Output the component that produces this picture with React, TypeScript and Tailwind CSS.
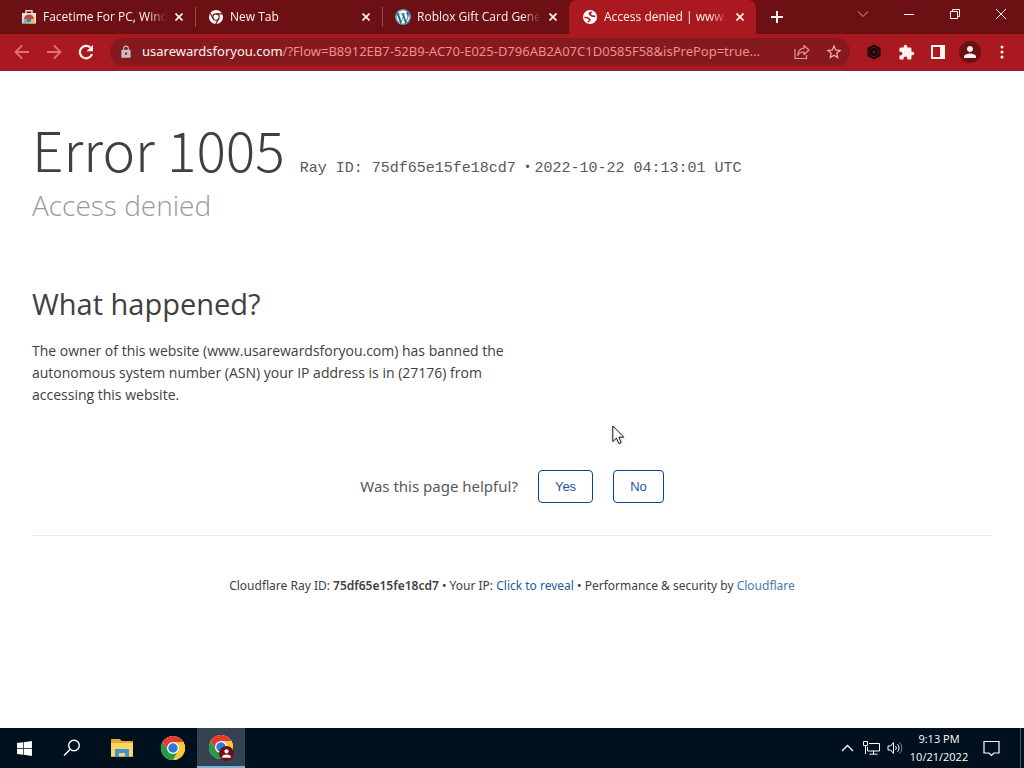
import type { ReactNode } from "react";
import { MdExtension, MdPerson, MdStarBorder, MdLock } from "react-icons/md";
import { FaWordpress, FaWindows } from "react-icons/fa";

function ChromeLogo({ size }: { size: number }) {
  return (
    <svg width={size} height={size} viewBox="0 0 48 48" aria-hidden="true">
      <circle cx="24" cy="24" r="24" fill="#fff" />
      <path d="M24 12h20.8A24 24 0 0 0 3.2 12l10.4 18z" fill="#e33b2e" />
      <path d="M34.4 30 24 48A24 24 0 0 0 44.8 12H24z" fill="#fcc934" />
      <path d="M13.6 30 3.2 12A24 24 0 0 0 24 48l10.4-18z" fill="#249a46" />
      <circle cx="24" cy="24" r="12" fill="#fff" />
      <circle cx="24" cy="24" r="9.5" fill="#2f78e0" />
    </svg>
  );
}

function StoreIcon() {
  return (
    <svg width="16" height="16" viewBox="0 0 16 16" aria-hidden="true">
      <path d="M5 4V1.800h6V4" fill="none" stroke="#e8dcd8" strokeWidth="1.400" />
      <path d="M1 4h14v10.500H1z" fill="#e4dedb" />
      <path d="M3 10a5 4.500 0 0 1 10 0z" fill="#d8402f" />
      <path d="M2.500 10H6l2 4.500H2.500z" fill="#8fb09a" />
      <path d="M13.500 10H10l-2 4.500h5.500z" fill="#f0c13b" />
      <circle cx="8" cy="11" r="2.200" fill="#3c7dd0" />
    </svg>
  );
}

function NewTabIcon() {
  return (
    <svg width="14" height="14" viewBox="0 0 48 48" aria-hidden="true">
      <circle cx="24" cy="24" r="24" fill="#fff" />
      <circle cx="24" cy="24" r="11" fill="none" stroke="#6d1014" strokeWidth="4" />
      <path d="M24 13h22M14.500 29.500 4 11M33.500 29.500 23 48" stroke="#6d1014" strokeWidth="4" />
    </svg>
  );
}

function GlobeIcon() {
  return (
    <svg width="16" height="16" viewBox="0 0 16 16" aria-hidden="true">
      <circle cx="8" cy="8" r="7" fill="#fff" />
      <path
        d="M2.300 8.600c1.600-.3 3.400-.2 4 .7.500.800 1.700.700 1.700 1.700 0 .9-1.400 1-2 2.400"
        fill="none"
        stroke="#a81a20"
        strokeWidth="1.500"
      />
      <path
        d="M9.700 2.800c-.3 1-2.300.8-2.300 2 0 1 1.500.8 2 1.700.5.800 2.200.3 3.900 1"
        fill="none"
        stroke="#a81a20"
        strokeWidth="1.800"
      />
    </svg>
  );
}

type TabProps = { icon: ReactNode; title: string; active?: boolean; divider?: boolean };

function Tab({ icon, title, active, divider }: TabProps) {
  return (
    <div
      className={`flex h-[34px] w-[187px] min-w-0 items-center pr-2 pl-[13px] ${
        active ? "rounded-t-lg bg-[#a9191f]" : ""
      }`}
    >
      <span className="flex w-4 shrink-0 justify-center">{icon}</span>
      <span className="ml-[6px] min-w-0 flex-1 overflow-hidden mask-r-from-85% text-xs whitespace-nowrap">
        {title}
      </span>
      <button aria-label={`Close ${title}`} className="ml-1 flex size-4 shrink-0 items-center justify-center">
        <svg width="8" height="8" viewBox="0 0 8 8" stroke="currentColor" strokeWidth="1.700">
          <path d="m.5.5 7 7m0-7-7 7" />
        </svg>
      </button>
      {divider && <span className="-mr-[9px] ml-2 h-5 w-px shrink-0 bg-[#a0474b]" />}
    </div>
  );
}

function WindowButton({ label, children }: { label: string; children: ReactNode }) {
  return (
    <button aria-label={label} className="flex h-7 w-[46px] items-center justify-center">
      <svg width="12" height="12" viewBox="0 0 12 12" fill="none" stroke="currentColor">
        {children}
      </svg>
    </button>
  );
}

function IconButton({ label, className = "", children }: { label: string; className?: string; children: ReactNode }) {
  return (
    <button aria-label={label} className={`flex size-8 shrink-0 items-center justify-center ${className}`}>
      {children}
    </button>
  );
}

function BrowserFrame() {
  return (
    <header className="text-[#fff4f0]">
      <div className="flex h-[34px] bg-[#6d1014]">
        <div className="flex min-w-0 pl-2">
          <Tab icon={<StoreIcon />} title="Facetime For PC, Windows" divider />
          <Tab icon={<NewTabIcon />} title="New Tab" divider />
          <Tab icon={<FaWordpress size={16} className="rounded-full bg-[#17708f]" />} title="Roblox Gift Card Generator" />
          <Tab icon={<GlobeIcon />} title="Access denied | www.usarewardsforyou.com" active />
        </div>
        <button aria-label="New tab" className="ml-[13px] flex w-4 shrink-0 items-center justify-center">
          <svg width="12" height="12" viewBox="0 0 12 12" stroke="currentColor" strokeWidth="2">
            <path d="M6 0v12M0 6h12" />
          </svg>
        </button>
        <div className="ml-auto flex shrink-0">
          <WindowButton label="Search tabs">
            <path d="m1 3.500 5 5 5-5" stroke="#e4a8a4" />
          </WindowButton>
          <WindowButton label="Minimize">
            <path d="M1 6.500h10" />
          </WindowButton>
          <WindowButton label="Restore">
            <path d="M1.500 3.500h7v7h-7zM3.500 3.500v-2h7v7h-2" />
          </WindowButton>
          <WindowButton label="Close window">
            <path d="m1 1 10 10M11 1 1 11" />
          </WindowButton>
        </div>
      </div>
      <div className="flex h-[37px] items-center border-b border-[#7d2a35] bg-[#a9191f] px-[6px]">
        <IconButton label="Back" className="text-[#dc7370]">
          <svg width="16" height="16" viewBox="0 0 16 16" fill="none" stroke="currentColor" strokeWidth="1.800">
            <path d="M15 8H2M8 1.500 1.500 8 8 14.500" />
          </svg>
        </IconButton>
        <IconButton label="Forward" className="text-[#dc7370]">
          <svg width="16" height="16" viewBox="0 0 16 16" fill="none" stroke="currentColor" strokeWidth="1.800">
            <path d="M1 8h13M8 1.500 14.500 8 8 14.500" />
          </svg>
        </IconButton>
        <IconButton label="Reload">
          <svg width="16" height="16" viewBox="0 0 16 16" aria-hidden="true">
            <path d="M14 10A6.200 6.200 0 1 1 12.300 3.500" fill="none" stroke="currentColor" strokeWidth="2.200" />
            <path d="M15 .8v6.400H8.600z" fill="currentColor" />
          </svg>
        </IconButton>
        <div className="ml-2 flex h-7 min-w-0 flex-1 items-center rounded-full bg-[#86191d] pl-[9px]">
          <MdLock size={14} className="shrink-0 text-[#c9bcc2]" />
          <span className="ml-[9px] min-w-0 flex-1 truncate font-['Noto_Sans',sans-serif] text-[13px] text-[#ea918c]">
            <span className="text-[#fff4f0]">usarewardsforyou.com</span>
            /?Flow=B8912EB7-52B9-AC70-E025-D796AB2A07C1D0585F58&amp;isPrePop=true...
          </span>
          <IconButton label="Share" className="text-[#e59a96]">
            <svg width="16" height="16" viewBox="0 0 16 16" fill="none" stroke="currentColor" strokeWidth="1.200">
              <path d="M1 5v9.500h11.500V11" />
              <path d="M10 1.500 15 6l-5 4.500V8C7 8 5 9 3.800 11.500 4 7.500 6 4.500 10 4.200z" strokeLinejoin="round" />
            </svg>
          </IconButton>
          <IconButton label="Bookmark this page" className="text-[#f0b6b1]">
            <MdStarBorder size={18} />
          </IconButton>
        </div>
        <IconButton label="Security extension" className="ml-2">
          <svg width="16" height="16" viewBox="0 0 16 16" aria-hidden="true">
            <path d="M8 .5 14.500 4v8L8 15.500 1.500 12V4z" fill="#180607" />
            <circle cx="8" cy="8" r="4.500" fill="none" stroke="#6b1518" />
            <circle cx="8" cy="8" r="1.500" fill="#6b1518" />
          </svg>
        </IconButton>
        <IconButton label="Extensions">
          <MdExtension size={17} />
        </IconButton>
        <IconButton label="Side panel">
          <svg width="14" height="14" viewBox="0 0 14 14" aria-hidden="true">
            <path d="M0 0h14v14H0zM2 2v10h7V2z" fill="currentColor" fillRule="evenodd" />
          </svg>
        </IconButton>
        <IconButton label="Profile">
          <span className="flex size-[22px] items-center justify-center rounded-full bg-[#6d1014]">
            <MdPerson size={18} />
          </span>
        </IconButton>
        <IconButton label="Menu">
          <svg width="4" height="14" viewBox="0 0 4 14" fill="currentColor">
            <circle cx="2" cy="2" r="1.500" />
            <circle cx="2" cy="7" r="1.500" />
            <circle cx="2" cy="12" r="1.500" />
          </svg>
        </IconButton>
      </div>
    </header>
  );
}

function ErrorPage() {
  return (
    <main className="flex-1 px-8 pt-[42px] text-[#404040]">
      <div className="flex flex-wrap items-baseline">
        <h1 className="font-['Noto_Sans_CJK_SC','Open_Sans',sans-serif] text-[55px] leading-[70px] font-light">
          Error 1005
        </h1>
        <p className="ml-[15px] font-['Liberation_Mono',monospace] text-[15px] text-[#595959]">
          Ray ID: 75df65e15fe18cd7{" "}
          <span className="mr-1 font-['Open_Sans',sans-serif]">•</span>
          <span>2022-10-22 04:13:01 UTC</span>
        </p>
      </div>
      <h2 className="mt-1 text-[28px] leading-9 font-light text-[#999999]">Access denied</h2>

      <section className="mt-[61px] max-w-[480px]">
        <h2 className="text-[29px] leading-10">What happened?</h2>
        <p className="mt-4 text-sm leading-[22px]">
          The owner of this website (www.usarewardsforyou.com) has banned the autonomous system number (ASN) your IP
          address is in (27176) from accessing this website.
        </p>
      </section>

      <div className="mt-16 flex items-center justify-center">
        <span className="font-['Noto_Sans',sans-serif] text-[15px] text-[#595959]">Was this page helpful?</span>
        <button className="ml-5 h-[33px] rounded border border-[#0045a6] px-4 font-['Liberation_Sans',sans-serif] text-[13px] text-[#1d55ab]">
          Yes
        </button>
        <button className="ml-5 h-[33px] rounded border border-[#0045a6] px-4 font-['Liberation_Sans',sans-serif] text-[13px] text-[#1d55ab]">
          No
        </button>
      </div>

      <footer className="mt-8 border-t border-[#ebebeb] pt-10 text-center font-['Noto_Sans',sans-serif] text-xs leading-5">
        Cloudflare Ray ID: <strong className="font-semibold">75df65e15fe18cd7</strong> • Your IP:{" "}
        <button className="text-[#2659a0]">Click to reveal</button> • Performance &amp; security by{" "}
        <a href="https://www.cloudflare.com" className="text-[#477bb0]">
          Cloudflare
        </a>
      </footer>
    </main>
  );
}

function Taskbar() {
  return (
    <nav aria-label="Taskbar" className="flex h-10 items-stretch bg-[#00101e] text-white">
      <button aria-label="Start" className="flex w-12 items-center justify-center">
        <FaWindows size={17} />
      </button>
      <button aria-label="Search" className="flex w-12 items-center justify-center">
        <svg width="18" height="18" viewBox="0 0 18 18" fill="none" stroke="currentColor" strokeWidth="1.400">
          <circle cx="11" cy="6.500" r="5.300" />
          <path d="m7 10.500-6 6" />
        </svg>
      </button>
      <button aria-label="File Explorer" className="flex w-[52px] items-center justify-center">
        <svg width="22" height="20" viewBox="0 0 22 20" aria-hidden="true">
          <path d="M0 1h9l1.500 2H22v16H0z" fill="#e3a92f" />
          <path d="M0 5h22v13H0z" fill="#fbd768" />
          <path d="M4 11h14v8h-4v-4H8v4H4z" fill="#3e94d0" />
        </svg>
      </button>
      <button aria-label="Google Chrome" className="flex w-[49px] items-center justify-center">
        <ChromeLogo size={24} />
      </button>
      <button
        aria-label="Google Chrome, open window"
        className="relative flex w-12 items-center justify-center border-b-2 border-[#76b0df] bg-[#34434f]"
      >
        <ChromeLogo size={24} />
        <span className="absolute right-[11px] bottom-[5px] flex size-[15px] items-center justify-center rounded-full bg-[#6d1014]">
          <MdPerson size={13} />
        </span>
      </button>
      <div className="ml-auto flex items-center">
        <button aria-label="Show hidden icons" className="flex w-6 justify-center">
          <svg width="13" height="8" viewBox="0 0 13 8" fill="none" stroke="currentColor" strokeWidth="1.300">
            <path d="m1 7 5.500-5.500L12 7" />
          </svg>
        </button>
        <button aria-label="Network" className="flex w-6 justify-center">
          <svg width="17" height="14" viewBox="0 0 17 14" fill="none" stroke="currentColor">
            <path d="M6 2.500h10.500v7.500h-12V6M10.500 10v3M6.500 13.200h8M.5.5h4v4h-4zM2.500 4.500v8.500" />
          </svg>
        </button>
        <button aria-label="Volume" className="flex w-6 justify-center">
          <svg width="17" height="14" viewBox="0 0 17 14" fill="none" stroke="currentColor">
            <path d="M1 5h2.500l3-3.500v11L3.500 9H1zM8.500 5a3 3 0 0 1 0 4M10.500 3.200a5.500 5.500 0 0 1 0 7.600" />
            <path d="M12.700 1.500a8 8 0 0 1 0 11" opacity=".5" />
          </svg>
        </button>
        <div className="w-16 text-center text-[11px] leading-[18px] whitespace-nowrap">
          <div>9:13 PM</div>
          <div>10/21/2022</div>
        </div>
        <button aria-label="Notifications" className="flex w-10 justify-center">
          <svg width="17" height="17" viewBox="0 0 17 17" fill="none" stroke="currentColor" strokeWidth="1.200">
            <path d="M1 1.500h15v11.500h-5L8.500 15.500 6 13H1z" />
          </svg>
        </button>
        <button aria-label="Show desktop" className="ml-[9px] h-10 w-1 border-l border-[#4a5560]" />
      </div>
    </nav>
  );
}

export default function App() {
  return (
    <div className="relative flex min-h-screen flex-col bg-white font-['Open_Sans','Noto_Sans',sans-serif]">
      <BrowserFrame />
      <ErrorPage />
      <Taskbar />
      <svg
        className="absolute top-[425px] left-[612px] drop-shadow-sm"
        width="13"
        height="20"
        viewBox="0 0 13 20"
        aria-hidden="true"
      >
        <path d="M.8 1v15.500l3.600-3.400 2.500 5.500 2.300-1-2.400-5.400h5z" fill="#fff" stroke="#111" />
      </svg>
    </div>
  );
}
